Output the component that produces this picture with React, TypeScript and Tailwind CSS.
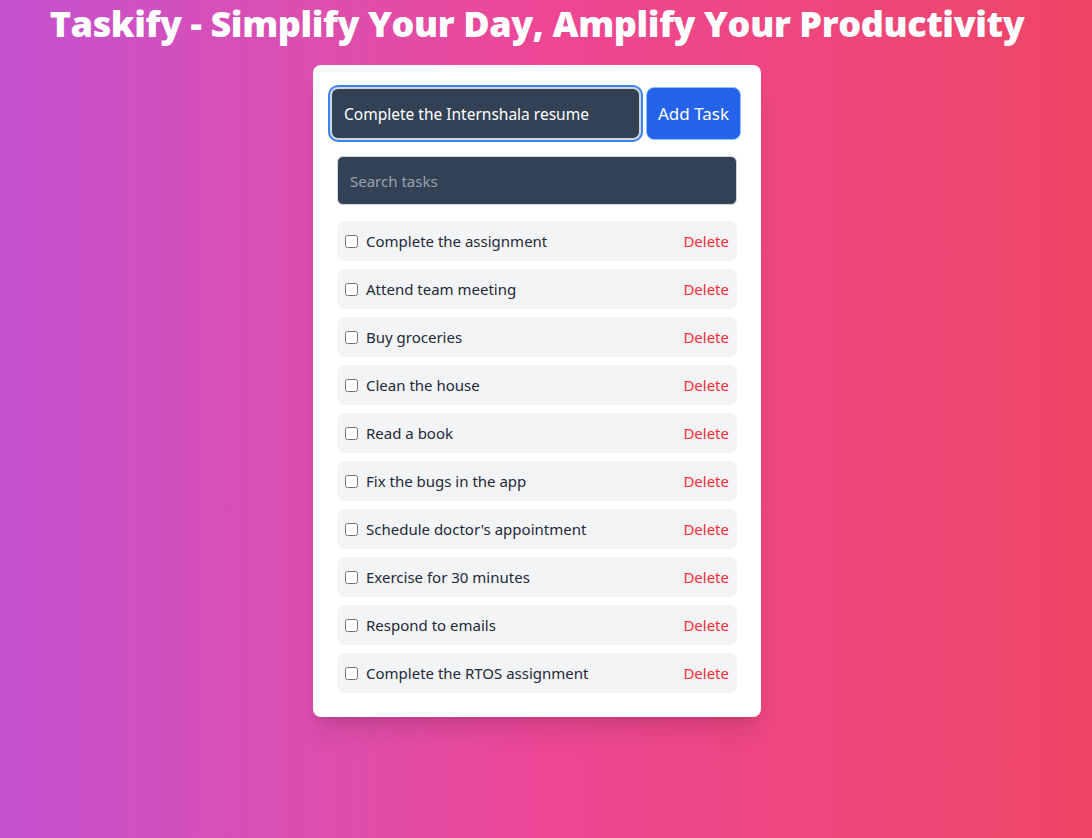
import { useState } from "react";

const initialTasks = [
	"Complete the assignment",
	"Attend team meeting",
	"Buy groceries",
	"Clean the house",
	"Read a book",
	"Fix the bugs in the app",
	"Schedule doctor's appointment",
	"Exercise for 30 minutes",
	"Respond to emails",
	"Complete the RTOS assignment",
];

const App = () => {
	const [tasks, setTasks] = useState(initialTasks.map((text, i) => ({ id: i, text, done: false })));
	const [newTask, setNewTask] = useState("Complete the Internshala resume");
	const [search, setSearch] = useState("");

	const addTask = () => {
		if (!newTask.trim()) return;
		setTasks([...tasks, { id: Date.now(), text: newTask, done: false }]);
		setNewTask("");
	};

	const visible = tasks.filter((t) => t.text.toLowerCase().includes(search.toLowerCase()));

	return (
		<div className="min-h-[838px] bg-gradient-to-r from-[#c551d0] via-[#ee4795] to-[#ef4565] font-['Noto_Sans',sans-serif] pr-[18px]">
			<h1 className="pt-[2px] text-center text-white text-[36px] leading-[44px] font-extrabold tracking-[-0.4px] font-['Open_Sans',sans-serif]">
				Taskify - Simplify Your Day, Amplify Your Productivity
			</h1>
			<div className="mx-auto mt-[19px] w-[448px] bg-white rounded-lg shadow-xl px-6 pt-[22px] pb-6">
				<div className="flex gap-[5px] -ml-[7px] -mr-[4px]">
					<input
						className="flex-1 h-[53px] rounded-lg bg-[#334155] text-white text-[15.5px] px-3 border-2 border-gray-300 outline-none ring-2 ring-[#3b82f6]"
						value={newTask}
						onChange={(e) => setNewTask(e.target.value)}
					/>
					<button
						onClick={addTask}
						className="w-[95px] h-[53px] rounded-lg bg-[#2563eb] text-white text-[17px] border border-blue-300"
					>
						Add Task
					</button>
				</div>
				<input
					className="mt-4 w-full h-[49px] rounded-md bg-[#334155] text-white text-[15px] px-3 border border-gray-300 outline-none placeholder:text-gray-400"
					placeholder="Search tasks"
					value={search}
					onChange={(e) => setSearch(e.target.value)}
				/>
				<ul className="mt-4 flex flex-col gap-2">
					{visible.map((t) => (
						<li key={t.id} className="flex items-center justify-between h-10 rounded-lg bg-gray-100 px-2">
							<label className="flex items-center gap-2 text-[15px] text-gray-800">
								<input
									type="checkbox"
									checked={t.done}
									onChange={() => setTasks(tasks.map((x) => (x.id === t.id ? { ...x, done: !x.done } : x)))}
								/>
								<span className={t.done ? "line-through" : ""}>{t.text}</span>
							</label>
							<button
								className="text-[15px] text-red-500"
								onClick={() => setTasks(tasks.filter((x) => x.id !== t.id))}
							>
								Delete
							</button>
						</li>
					))}
				</ul>
			</div>
		</div>
	);
};

export default App;
